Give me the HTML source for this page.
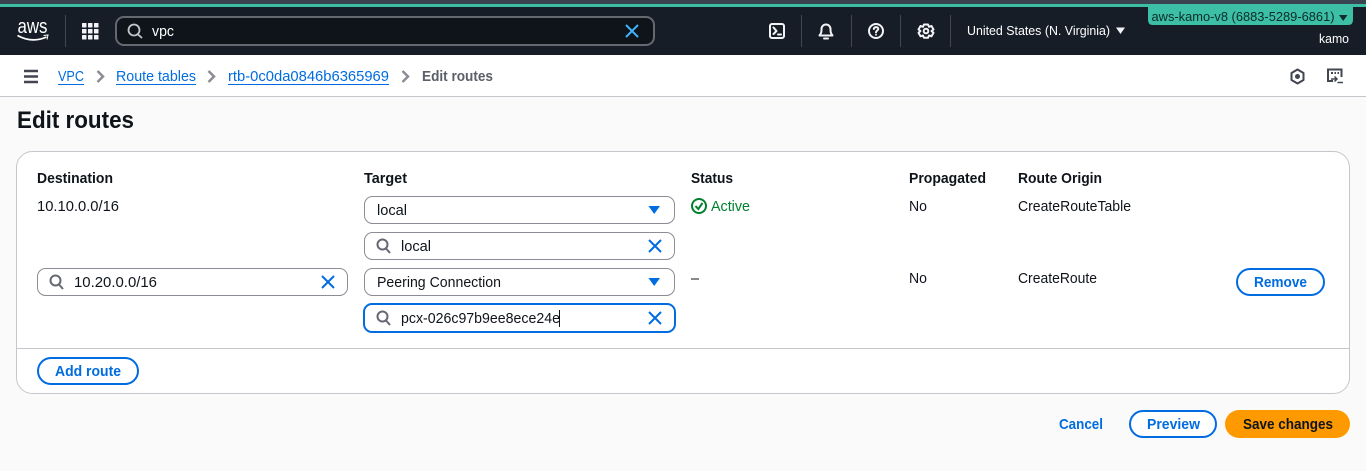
<!DOCTYPE html>
<html><head><meta charset="utf-8"><title>Edit routes</title>
<style>
html,body{margin:0;padding:0;width:1366px;height:471px;overflow:hidden;background:#fafafa}
svg{display:block}
text{font-family:"Liberation Sans",sans-serif;font-size:15px;fill:#0f141a}
.b{font-weight:700}
.l{fill:#006ce0}
.lb{fill:#006ce0;font-weight:700}
.w{fill:#fff}
.box{fill:#fff;stroke:#8c8c94;stroke-width:1}
.btn{fill:#fff;stroke:#006ce0;stroke-width:2}
.x{fill:none;stroke:#006ce0;stroke-width:2}
.s{fill:none;stroke:#656871;stroke-width:2}
.ic{fill:none;stroke:#f3f3f7;stroke-width:2;stroke-linejoin:round;stroke-linecap:round}
.div{stroke:#424650;stroke-width:1}
.chev{fill:none;stroke:#8c8c94;stroke-width:2.500}
</style></head><body>
<svg width="1366" height="471" viewBox="0 0 1366 471" xmlns="http://www.w3.org/2000/svg">
<rect width="1366" height="471" fill="#fafafa"/>
<!-- top nav -->
<rect width="1366" height="55" fill="#161d26"/>
<rect width="1366" height="4" fill="#3a4350"/>
<rect y="4" width="1366" height="3" fill="#3dbfa5"/>
<!-- aws logo -->
<text x="17.500" y="33" textLength="30" lengthAdjust="spacingAndGlyphs" class="w" style="font-size:20px">aws</text>
<path d="M17.500 35.500Q32 43.500 46.500 37" fill="none" stroke="#fff" stroke-width="1.700"/>
<path d="M43.500 35.500L48 35L47 39.500" fill="none" stroke="#fff" stroke-width="1"/>
<line x1="65.500" y1="15" x2="65.500" y2="47" class="div"/>
<!-- grid -->
<g fill="#f3f3f7"><rect x="82" y="23" width="4.500" height="4.500" rx=".5"/><rect x="88" y="23" width="4.500" height="4.500" rx=".5"/><rect x="94" y="23" width="4.500" height="4.500" rx=".5"/><rect x="82" y="29" width="4.500" height="4.500" rx=".5"/><rect x="88" y="29" width="4.500" height="4.500" rx=".5"/><rect x="94" y="29" width="4.500" height="4.500" rx=".5"/><rect x="82" y="35" width="4.500" height="4.500" rx=".5"/><rect x="88" y="35" width="4.500" height="4.500" rx=".5"/><rect x="94" y="35" width="4.500" height="4.500" rx=".5"/></g>
<!-- search -->
<rect x="116" y="17" width="538" height="28" rx="8" fill="#0f141a" stroke="#656871" stroke-width="2"/>
<circle cx="134" cy="30" r="5.500" fill="none" stroke="#c6c6cd" stroke-width="1.800"/><path d="M138 34.500L142 38" stroke="#c6c6cd" stroke-width="1.800"/>
<text x="152" y="36" textLength="22" lengthAdjust="spacingAndGlyphs" class="w">vpc</text>
<path d="M626 25L638 37M638 25L626 37" fill="none" stroke="#42b4ff" stroke-width="2"/>
<!-- right icons -->
<rect x="770" y="24" width="14" height="14" rx="2" class="ic"/><path d="M773.500 27.500L776.500 31L773.500 34M778 34.500H781" class="ic" stroke-width="1.500"/>
<line x1="801.500" y1="15" x2="801.500" y2="47" class="div"/>
<path d="M819.500 35.500C821.500 33 821.500 31.500 821.500 29A4.500 4.500 0 0 1 830.500 29C830.500 31.500 830.500 33 832.500 35.500Z" class="ic"/><path d="M824 38.500H828" class="ic"/>
<line x1="851.500" y1="15" x2="851.500" y2="47" class="div"/>
<circle cx="876" cy="31" r="7" class="ic"/><path d="M873.800 29C874 26.500 878.300 26.500 878.300 29C878.300 30.500 876 30.500 876 32.500" class="ic" stroke-width="1.500"/><rect x="875.200" y="34" width="1.600" height="1.600" fill="#f3f3f7"/>
<line x1="900.500" y1="15" x2="900.500" y2="47" class="div"/>
<path d="M924 24.500H928L929 26.800L931.500 26L933.500 29.500L931.500 31L933.500 32.800L931.500 36.300L929 35.500L928 37.800H924L923 35.500L920.500 36.300L918.500 32.800L920.500 31L918.500 29.500L920.500 26L923 26.800Z" class="ic" stroke-width="1.700"/><circle cx="926" cy="31" r="2.300" class="ic" stroke-width="1.700"/>
<line x1="950.500" y1="15" x2="950.500" y2="47" class="div"/>
<text x="967" y="35" textLength="143" lengthAdjust="spacingAndGlyphs" class="w" style="font-size:13px">United States (N. Virginia)</text>
<path d="M1116 27.500H1125L1120.500 34Z" fill="#f3f3f7"/>
<!-- account badge -->
<path d="M1148 7H1353V20Q1353 25 1348 25H1153Q1148 25 1148 20Z" fill="#3dbfa5"/>
<text x="1151.500" y="21" textLength="183" lengthAdjust="spacingAndGlyphs" style="font-size:13px;fill:#0b2b2b">aws-kamo-v8 (6883-5289-6861)</text>
<path d="M1339 15H1347.500L1343.200 21Z" fill="#0f2b2b"/>
<text x="1319" y="43" textLength="30" lengthAdjust="spacingAndGlyphs" class="w" style="font-size:13px">kamo</text>
<!-- breadcrumb bar -->
<rect y="55" width="1366" height="41" fill="#fff"/>
<rect y="96" width="1366" height="1" fill="#c6c6cd"/>
<path d="M24 71H38M24 76.500H38M24 82H38" stroke="#424650" stroke-width="2.500"/>
<text x="58" y="81" textLength="26" lengthAdjust="spacingAndGlyphs" class="l">VPC</text><rect x="58" y="84" width="26" height="1" fill="#006ce0"/>
<path d="M97.500 71L103 76.500L97.500 82" class="chev"/>
<text x="116" y="81" textLength="80" lengthAdjust="spacingAndGlyphs" class="l">Route tables</text><rect x="116" y="84" width="80" height="1" fill="#006ce0"/>
<path d="M208.500 71L214 76.500L208.500 82" class="chev"/>
<text x="228" y="81" textLength="161" lengthAdjust="spacingAndGlyphs" class="l">rtb-0c0da0846b6365969</text><rect x="228" y="84" width="161" height="1" fill="#006ce0"/>
<path d="M402.500 71L408 76.500L402.500 82" class="chev"/>
<text x="422" y="81" textLength="71" lengthAdjust="spacingAndGlyphs" class="b" style="fill:#5b5f67">Edit routes</text>
<!-- breadcrumb right icons -->
<path d="M1297.500 69.500L1303.500 73V80L1297.500 83.500L1291.500 80V73Z" fill="none" stroke="#424650" stroke-width="2" stroke-linejoin="round"/><circle cx="1297.500" cy="76.500" r="2.500" fill="#424650"/>
<path d="M1333 81H1328V69.500H1341.500V77" fill="none" stroke="#424650" stroke-width="2"/><path d="M1331 73H1333M1334.500 73H1336M1337.500 73H1339" stroke="#424650" stroke-width="2"/><path d="M1331 79H1337M1334.500 76.500L1337 79L1334.500 81.500" fill="none" stroke="#424650" stroke-width="1.500"/><path d="M1337.500 82.500H1343" stroke="#424650" stroke-width="1.500"/>
<!-- heading -->
<text x="17" y="128" textLength="117" lengthAdjust="spacingAndGlyphs" class="b" style="font-size:24px">Edit routes</text>
<!-- card -->
<rect x="16.500" y="151.500" width="1333" height="242" rx="16" fill="#fff" stroke="#c6c6cd"/>
<line x1="17" y1="348.500" x2="1349" y2="348.500" stroke="#c6c6cd"/>
<!-- column headers -->
<text x="37" y="183" textLength="76" lengthAdjust="spacingAndGlyphs" class="b">Destination</text>
<text x="364" y="183" textLength="43" lengthAdjust="spacingAndGlyphs" class="b">Target</text>
<text x="691" y="183" textLength="42" lengthAdjust="spacingAndGlyphs" class="b">Status</text>
<text x="909" y="183" textLength="77" lengthAdjust="spacingAndGlyphs" class="b">Propagated</text>
<text x="1018" y="183" textLength="84" lengthAdjust="spacingAndGlyphs" class="b">Route Origin</text>
<!-- row 1 -->
<text x="37" y="211" textLength="82" lengthAdjust="spacingAndGlyphs">10.10.0.0/16</text>
<rect x="364.500" y="196.500" width="310" height="27" rx="8" class="box"/>
<text x="377" y="215" textLength="30" lengthAdjust="spacingAndGlyphs">local</text>
<path d="M648.500 206H660L654.200 214Z" fill="#006ce0"/>
<rect x="364.500" y="232.500" width="310" height="27" rx="8" class="box"/>
<circle cx="382.500" cy="244.500" r="5" class="s"/><path d="M386 248.500L390 253" class="s"/>
<text x="401" y="251" textLength="30" lengthAdjust="spacingAndGlyphs">local</text>
<path d="M649 240L661 252M661 240L649 252" class="x"/>
<circle cx="699" cy="206" r="7" fill="none" stroke="#00802f" stroke-width="2"/><path d="M695.500 206L698.300 209L702.500 203" fill="none" stroke="#00802f" stroke-width="2"/>
<text x="711" y="211" textLength="39" lengthAdjust="spacingAndGlyphs" style="fill:#00802f">Active</text>
<text x="909" y="211" textLength="18" lengthAdjust="spacingAndGlyphs">No</text>
<text x="1018" y="211" textLength="113" lengthAdjust="spacingAndGlyphs">CreateRouteTable</text>
<!-- row 2 -->
<rect x="37.500" y="268.500" width="310" height="27" rx="8" class="box"/>
<circle cx="55.500" cy="280.500" r="5" class="s"/><path d="M59 284.500L63 289" class="s"/>
<text x="74" y="287" textLength="83" lengthAdjust="spacingAndGlyphs">10.20.0.0/16</text>
<path d="M322 276L334 288M334 276L322 288" class="x"/>
<rect x="364.500" y="268.500" width="310" height="27" rx="8" class="box"/>
<text x="377" y="287" textLength="124" lengthAdjust="spacingAndGlyphs">Peering Connection</text>
<path d="M648.500 278H660L654.200 286Z" fill="#006ce0"/>
<rect x="364" y="304" width="311" height="28" rx="8" fill="#fff" stroke="#006ce0" stroke-width="2"/>
<circle cx="382.500" cy="316.500" r="5" class="s"/><path d="M386 320.500L390 325" class="s"/>
<text x="401" y="323" textLength="159" lengthAdjust="spacingAndGlyphs">pcx-026c97b9ee8ece24e</text>
<rect x="559" y="310" width="1" height="17" fill="#0f141a"/>
<path d="M649 312L661 324M661 312L649 324" class="x"/>
<text x="691" y="283" textLength="8" lengthAdjust="spacingAndGlyphs">–</text>
<text x="909" y="283" textLength="18" lengthAdjust="spacingAndGlyphs">No</text>
<text x="1018" y="283" textLength="79" lengthAdjust="spacingAndGlyphs">CreateRoute</text>
<rect x="1237" y="269" width="87" height="26" rx="13" class="btn"/>
<text x="1254" y="287" textLength="53" lengthAdjust="spacingAndGlyphs" class="lb">Remove</text>
<!-- add route -->
<rect x="38" y="358" width="100" height="26" rx="13" class="btn"/>
<text x="55" y="376" textLength="66" lengthAdjust="spacingAndGlyphs" class="lb">Add route</text>
<!-- footer -->
<text x="1059" y="429" textLength="44" lengthAdjust="spacingAndGlyphs" class="lb">Cancel</text>
<rect x="1130" y="411" width="86" height="26" rx="13" class="btn"/>
<text x="1147" y="429" textLength="53" lengthAdjust="spacingAndGlyphs" class="lb">Preview</text>
<rect x="1225" y="410" width="125" height="28" rx="14" fill="#ff9900"/>
<text x="1243" y="429" textLength="90" lengthAdjust="spacingAndGlyphs" class="b">Save changes</text>
</svg>
</body></html>
